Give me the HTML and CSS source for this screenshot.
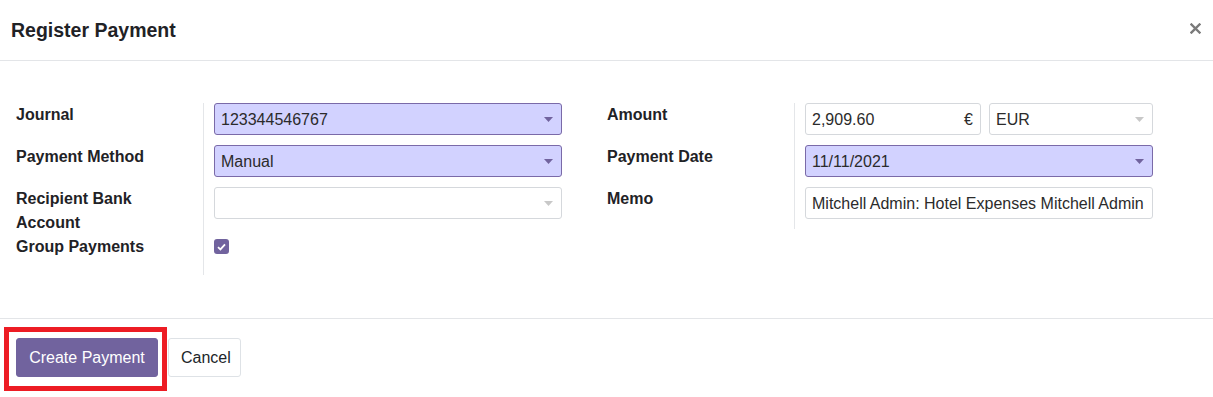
FILE: index.html
```html
<!DOCTYPE html>
<html lang="en">
<head>
  <meta charset="UTF-8">
  <title>Register Payment</title>
  <link rel="stylesheet" href="styles.css">
</head>
<body>

  <div class="modal">
    <!-- Header -->
    <div class="modal-header">
      <h4 class="modal-title">Register Payment</h4>
      <button class="close" aria-label="Close">
        <svg width="11" height="11" viewBox="0 0 11 11">
          <path d="M1.5 1.5 L9.5 9.5 M9.5 1.5 L1.5 9.5" stroke="#7a7a7a" stroke-width="2.4" stroke-linecap="square"/>
        </svg>
      </button>
    </div>

    <!-- Form -->
    <div class="modal-body">
      <div class="group">
        <div class="label">Journal</div>
        <div class="cell">
          <div class="select required">
            <span>123344546767</span>
            <svg class="caret" width="9" height="5" viewBox="0 0 9 5"><path d="M0 0 H9 L4.5 5 Z"/></svg>
          </div>
        </div>

        <div class="label">Payment Method</div>
        <div class="cell">
          <div class="select required">
            <span>Manual</span>
            <svg class="caret" width="9" height="5" viewBox="0 0 9 5"><path d="M0 0 H9 L4.5 5 Z"/></svg>
          </div>
        </div>

        <div class="label">Recipient Bank Account</div>
        <div class="cell">
          <div class="select">
            <span></span>
            <svg class="caret" width="9" height="5" viewBox="0 0 9 5"><path d="M0 0 H9 L4.5 5 Z"/></svg>
          </div>
        </div>

        <div class="label last">Group Payments</div>
        <div class="cell last">
          <span class="checkbox">
            <svg width="9" height="8" viewBox="0 0 9 8"><path d="M1 4.2 L3.4 6.4 L8 1.4" fill="none" stroke="#fff" stroke-width="1.8"/></svg>
          </span>
        </div>
      </div>

      <div class="group">
        <div class="label">Amount</div>
        <div class="cell">
          <div class="amount-row">
            <div class="input amount">
              <span>2,909.60</span>
              <span class="symbol">€</span>
            </div>
            <div class="select currency">
              <span>EUR</span>
              <svg class="caret" width="9" height="5" viewBox="0 0 9 5"><path d="M0 0 H9 L4.5 5 Z"/></svg>
            </div>
          </div>
        </div>

        <div class="label">Payment Date</div>
        <div class="cell">
          <div class="select required">
            <span>11/11/2021</span>
            <svg class="caret" width="9" height="5" viewBox="0 0 9 5"><path d="M0 0 H9 L4.5 5 Z"/></svg>
          </div>
        </div>

        <div class="label">Memo</div>
        <div class="cell">
          <input class="input memo" type="text" value="Mitchell Admin: Hotel Expenses Mitchell Admin">
        </div>
      </div>
    </div>

    <!-- Footer -->
    <div class="modal-footer">
      <button class="btn btn-primary">Create Payment</button>
      <button class="btn btn-secondary">Cancel</button>
      <span class="highlight"></span>
    </div>
  </div>

</body>
</html>
```

FILE: styles.css
```css
body {
  margin: 0;
  font-family: "Liberation Sans", Arial, sans-serif;
  color: #212529;
  background-color: #fff;
}

.modal {
  width: 1213px;
  height: 397px;
  overflow: hidden;
}

/* Header */
.modal-header {
  height: 60px;
  display: flex;
  align-items: center;
  justify-content: space-between;
  padding: 0 12px 0 11px;
  border-bottom: 1px solid #e3e5e8;
}

.modal-title {
  margin: 0;
  font-size: 19.5px;
  font-weight: bold;
  color: #1f2226;
}

.close {
  background: none;
  border: none;
  padding: 0;
  margin-top: -4px;
  cursor: pointer;
  display: flex;
}

/* Body */
.modal-body {
  display: grid;
  grid-template-columns: 1fr 1fr;
  column-gap: 45px;
  align-items: start;
  padding: 42px 60px 43px 16px;
}

.group {
  display: grid;
  grid-template-columns: 188px 1fr;
}

.label {
  font-size: 16px;
  font-weight: bold;
  line-height: 24px;
  padding-right: 30px;
  border-right: 1px solid #e4e6e9;
  color: #1f2226;
}

.label.last {
  padding-bottom: 16px;
}

.cell {
  padding-left: 10px;
  padding-bottom: 10px;
}

.cell.last {
  padding-top: 4px;
  padding-bottom: 0;
}

.select,
.input {
  box-sizing: border-box;
  height: 32px;
  display: flex;
  align-items: center;
  justify-content: space-between;
  padding: 1px 6px 0;
  border: 1px solid #d5d8dc;
  border-radius: 3px;
  background-color: #fff;
  font-family: "Liberation Sans", Arial, sans-serif;
  font-size: 16px;
  color: #2b2b2b;
}

.select.required {
  background-color: #d2d2ff;
  border-color: #7a6aa8;
}

.caret {
  fill: #c8c8c8;
  margin-right: 2px;
}

.select.required .caret {
  fill: #71639e;
}

.amount-row {
  display: flex;
  gap: 8px;
}

.amount {
  flex: 0 0 176px;
}

.symbol {
  margin-right: 1px;
}

.currency {
  flex: 1;
}

.memo {
  width: 100%;
  outline: none;
}

.checkbox {
  display: flex;
  align-items: center;
  justify-content: center;
  width: 15px;
  height: 15px;
  border-radius: 3px;
  background-color: #71639e;
}

/* Footer */
.modal-footer {
  position: relative;
  display: flex;
  gap: 10px;
  padding: 19px 16px 20px;
  border-top: 1px solid #e3e5e8;
}

.btn {
  box-sizing: border-box;
  height: 39px;
  padding: 1px 12px 0;
  border-radius: 3px;
  font-family: "Liberation Sans", Arial, sans-serif;
  font-size: 16px;
  cursor: pointer;
}

.btn-primary {
  width: 142px;
  background-color: #71639e;
  border: 1px solid #71639e;
  color: #fff;
}

.btn-secondary {
  width: 73px;
  background-color: #fff;
  border: 1px solid #dee2e6;
  color: #212529;
}

/* annotation box drawn over the primary button */
.highlight {
  position: absolute;
  left: 4px;
  top: 8px;
  width: 163px;
  height: 64px;
  box-sizing: border-box;
  border: 5px solid #ed1c24;
  pointer-events: none;
}
```
